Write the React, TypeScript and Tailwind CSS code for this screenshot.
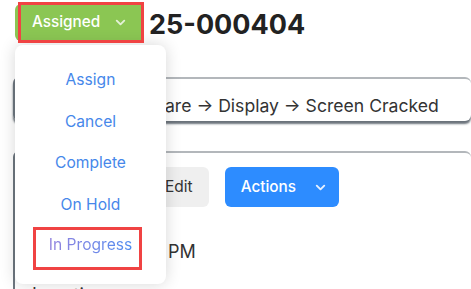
import { ChevronDown, Pencil, ArrowLeft } from "lucide-react";

const statusOptions = ["Assign", "Cancel", "Complete", "On Hold"];

export default function App() {
  return (
    <div className="relative w-[471px] h-[289px] overflow-hidden bg-white font-['Inter',sans-serif]">
      {/* Header */}
      <div className="pl-[15px] pt-[4px]">
        <div className="flex items-center gap-[6px]">
          <button className="flex h-[37px] w-[128px] items-center rounded-l-md bg-[#8bc653] pl-[17px] text-[15.3px] font-medium text-white">
            Assigned
            <ChevronDown className="ml-[13px] h-[15px] w-[15px] text-[#e4f1d8]" strokeWidth={3} />
          </button>
          <h1 className="mt-[4px] text-[27px] font-bold leading-none text-[#222]">25-000404</h1>
        </div>
      </div>

      {/* Category path */}
      <div className="ml-[13px] mt-[36px] flex h-[44px] w-[458px] items-center rounded-md border-t-2 border-l-2 border-t-[#b3b7bb] border-l-[#6e7780] pl-[16px] pt-[12px] text-[17.6px] text-[#333] shadow-[0_3px_2px_rgba(70,80,90,0.8)]">
        Phone → Hardware → Display → Screen Cracked
      </div>

      {/* Details card */}
      <div className="ml-[13px] mt-[30px] h-[200px] w-[458px] rounded-md border-t-2 border-l-2 border-t-[#b3b7bb] border-l-[#6e7780] pl-[13px] pt-[14px]">
        <div className="flex items-center gap-[16px]">
          <button className="flex h-[40px] items-center gap-[6px] rounded-md bg-[#efefef] px-[14px] text-[15px] text-[#333]">
            <ArrowLeft className="h-[16px] w-[16px]" />
            Back
          </button>
          <button className="flex h-[40px] items-center gap-[6px] rounded-md bg-[#efefef] px-[16px] text-[15.5px] text-[#333]">
            <Pencil className="h-[14px] w-[14px]" />
            Edit
          </button>
          <button className="flex h-[40px] w-[114px] items-center rounded-md bg-[#2d8cff] pl-[16px] text-[15.3px] font-medium text-white">
            Actions
            <ChevronDown className="ml-[17px] h-[15px] w-[15px] text-[#e6f0ff]" strokeWidth={3} />
          </button>
        </div>
        <div className="mt-[31px] pl-[4px] text-[18px] text-[#333]">3/14/2025 2:30 PM</div>
        <div className="mt-[16px] pl-[4px] text-[18px] text-[#333]">Location</div>
      </div>

      {/* Status dropdown */}
      <div className="absolute left-[15px] top-[45px] w-[151px] rounded-lg bg-white pt-[14px] shadow-[0_0_16px_rgba(0,0,0,0.16)]">
        {statusOptions.map((opt) => (
          <div key={opt} className="flex h-[41.5px] items-center justify-center text-[15.6px] text-[#4687ea]">
            {opt}
          </div>
        ))}
        <div className="flex h-[43px] items-center justify-center pb-[4px]">
          <span className="bg-gradient-to-r from-[#9282de] to-[#4d8cf0] bg-clip-text text-[15.6px] text-transparent">
            In Progress
          </span>
        </div>
        <div className="h-[16px]" />
      </div>

      {/* Annotation outlines */}
      <div className="absolute left-[18px] top-[2px] h-[41px] w-[126px] border-[3px] border-[#f04343]" />
      <div className="absolute left-[33px] top-[227px] h-[43px] w-[109px] border-[3px] border-[#f04343]" />
    </div>
  );
}
